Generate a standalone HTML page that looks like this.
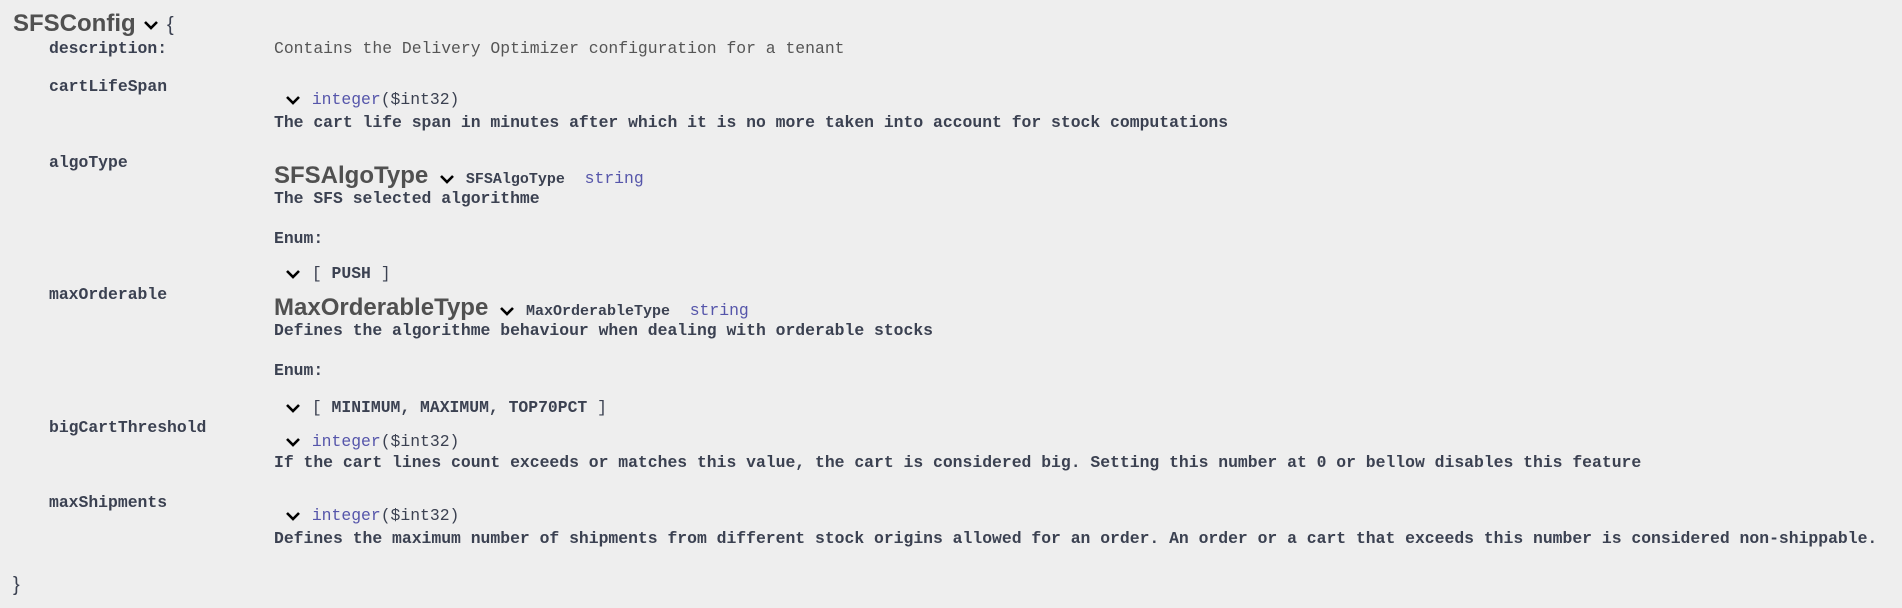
<!DOCTYPE html>
<html><head><meta charset="utf-8"><style>
html,body{margin:0;padding:0;background:#eeeeee;width:1902px;height:608px;overflow:hidden}
.a{position:absolute;white-space:nowrap;line-height:20px;font-family:"Liberation Mono",monospace;font-size:16.4px;color:#3b4151;font-weight:bold}
.n{font-weight:normal;color:#555}
.t{font-family:"Liberation Sans",sans-serif;font-size:24px;font-weight:bold;color:#505050;line-height:28px}
.p{color:#5555aa;font-weight:normal}
svg{vertical-align:middle}
</style></head><body>
<div class="a t" style="left:13px;top:10px">SFSConfig <svg width="18" height="14" viewBox="0 0 18 14"><path d="M3 4l6 6 6-6" stroke="#000" stroke-width="2.6" fill="none"/></svg> <span style="font-weight:normal;font-size:20px;color:#3b4151">{</span></div>

<div class="a" style="left:49px;top:39px">description:</div>
<div class="a n" style="left:274px;top:39px">Contains the Delivery Optimizer configuration for a tenant</div>

<div class="a" style="left:49px;top:77px">cartLifeSpan</div>
<div class="a" style="left:284px;top:90px"><svg width="18" height="14" viewBox="0 0 18 14"><path d="M3 4l6 6 6-6" stroke="#000" stroke-width="2.6" fill="none"/></svg> <span class="p">integer</span><span style="font-weight:normal">($int32)</span></div>
<div class="a" style="left:274px;top:113px">The cart life span in minutes after which it is no more taken into account for stock computations</div>

<div class="a" style="left:49px;top:153px">algoType</div>
<div class="a" style="left:274px;top:162px"><span class="t">SFSAlgoType</span> <svg width="18" height="14" viewBox="0 0 18 14"><path d="M3 4l6 6 6-6" stroke="#000" stroke-width="2.6" fill="none"/></svg> <span style="font-size:15px">SFSAlgoType</span>&nbsp; <span class="p">string</span></div>
<div class="a" style="left:274px;top:189px">The SFS selected algorithme</div>
<div class="a" style="left:274px;top:229px">Enum:</div>
<div class="a" style="left:284px;top:264px"><svg width="18" height="14" viewBox="0 0 18 14"><path d="M3 4l6 6 6-6" stroke="#000" stroke-width="2.6" fill="none"/></svg> <span style="font-weight:normal">[</span> PUSH <span style="font-weight:normal">]</span></div>

<div class="a" style="left:49px;top:285px">maxOrderable</div>
<div class="a" style="left:274px;top:294px"><span class="t">MaxOrderableType</span> <svg width="18" height="14" viewBox="0 0 18 14"><path d="M3 4l6 6 6-6" stroke="#000" stroke-width="2.6" fill="none"/></svg> <span style="font-size:15px">MaxOrderableType</span>&nbsp; <span class="p">string</span></div>
<div class="a" style="left:274px;top:321px">Defines the algorithme behaviour when dealing with orderable stocks</div>
<div class="a" style="left:274px;top:361px">Enum:</div>
<div class="a" style="left:284px;top:398px"><svg width="18" height="14" viewBox="0 0 18 14"><path d="M3 4l6 6 6-6" stroke="#000" stroke-width="2.6" fill="none"/></svg> <span style="font-weight:normal">[</span> MINIMUM, MAXIMUM, TOP70PCT <span style="font-weight:normal">]</span></div>

<div class="a" style="left:49px;top:418px">bigCartThreshold</div>
<div class="a" style="left:284px;top:432px"><svg width="18" height="14" viewBox="0 0 18 14"><path d="M3 4l6 6 6-6" stroke="#000" stroke-width="2.6" fill="none"/></svg> <span class="p">integer</span><span style="font-weight:normal">($int32)</span></div>
<div class="a" style="left:274px;top:453px">If the cart lines count exceeds or matches this value, the cart is considered big. Setting this number at 0 or bellow disables this feature</div>

<div class="a" style="left:49px;top:493px">maxShipments</div>
<div class="a" style="left:284px;top:506px"><svg width="18" height="14" viewBox="0 0 18 14"><path d="M3 4l6 6 6-6" stroke="#000" stroke-width="2.6" fill="none"/></svg> <span class="p">integer</span><span style="font-weight:normal">($int32)</span></div>
<div class="a" style="left:274px;top:529px">Defines the maximum number of shipments from different stock origins allowed for an order. An order or a cart that exceeds this number is considered non-shippable.</div>

<div class="a" style="left:13px;top:575px;font-family:'Liberation Sans',sans-serif;font-weight:normal;font-size:20px">}</div>
</body></html>
